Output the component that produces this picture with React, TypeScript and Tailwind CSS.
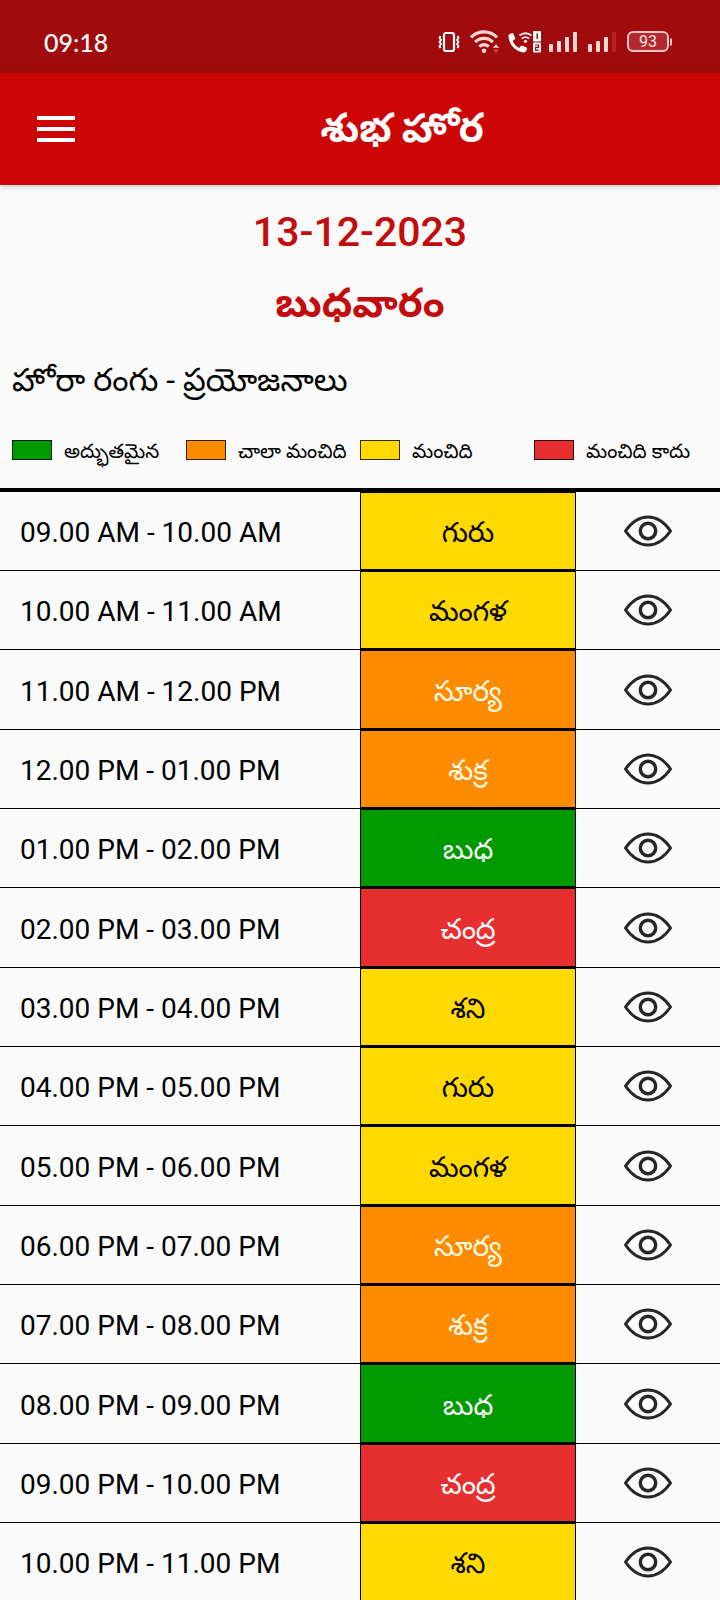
type Tone = 'great' | 'good' | 'fair' | 'bad';

const telugu = "font-['Roboto','Noto_Sans_Telugu','Noto_Sans',sans-serif]";

const toneFill: Record<Tone, string> = {
  great: 'bg-[#009a00]',
  good: 'bg-[#ff8c00]',
  fair: 'bg-[#ffda00]',
  bad: 'bg-[#e63030]',
};

const toneText: Record<Tone, string> = {
  great: 'text-white',
  good: 'text-[#fffbe8]',
  fair: 'text-black',
  bad: 'text-white',
};

const legend: { tone: Tone; label: string }[] = [
  { tone: 'great', label: 'అద్భుతమైన' },
  { tone: 'good', label: 'చాలా మంచిది' },
  { tone: 'fair', label: 'మంచిది' },
  { tone: 'bad', label: 'మంచిది కాదు' },
];

const horas: { time: string; name: string; tone: Tone }[] = [
  { time: '09.00 AM - 10.00 AM', name: 'గురు', tone: 'fair' },
  { time: '10.00 AM - 11.00 AM', name: 'మంగళ', tone: 'fair' },
  { time: '11.00 AM - 12.00 PM', name: 'సూర్య', tone: 'good' },
  { time: '12.00 PM - 01.00 PM', name: 'శుక్ర', tone: 'good' },
  { time: '01.00 PM - 02.00 PM', name: 'బుధ', tone: 'great' },
  { time: '02.00 PM - 03.00 PM', name: 'చంద్ర', tone: 'bad' },
  { time: '03.00 PM - 04.00 PM', name: 'శని', tone: 'fair' },
  { time: '04.00 PM - 05.00 PM', name: 'గురు', tone: 'fair' },
  { time: '05.00 PM - 06.00 PM', name: 'మంగళ', tone: 'fair' },
  { time: '06.00 PM - 07.00 PM', name: 'సూర్య', tone: 'good' },
  { time: '07.00 PM - 08.00 PM', name: 'శుక్ర', tone: 'good' },
  { time: '08.00 PM - 09.00 PM', name: 'బుధ', tone: 'great' },
  { time: '09.00 PM - 10.00 PM', name: 'చంద్ర', tone: 'bad' },
  { time: '10.00 PM - 11.00 PM', name: 'శని', tone: 'fair' },
];

function VibrateIcon() {
  return (
    <svg width="22" height="22" viewBox="0 0 22 22" fill="none" stroke="#fff" aria-hidden="true">
      <rect x="6" y="2" width="10" height="18" rx="2" strokeWidth="2.200" />
      <path d="M2.500 5l-1 2 1.500 2-1.500 2 1.500 2-1.500 2 1 2M19.500 5l1 2-1.500 2 1.500 2-1.500 2 1.500 2-1 2" strokeWidth="1.800" />
    </svg>
  );
}

function WifiIcon() {
  return (
    <svg width="30" height="24" viewBox="0 0 30 24" fill="none" stroke="#ffd6d6" aria-hidden="true">
      <path d="M1 7.500a18 18 0 0 1 26 0" strokeWidth="3.200" />
      <path d="M5.200 12.200a12 12 0 0 1 17.600 0" strokeWidth="3.200" />
      <path d="M9.300 16.600a6.500 6.500 0 0 1 9.400 0" strokeWidth="3.200" />
      <circle cx="14" cy="20.800" r="2.300" fill="#ffd6d6" stroke="none" />
      <path d="M26 14l3.500 4h-7z" fill="#ffd6d6" stroke="#a00c0c" strokeWidth=".5" />
      <path d="M23 19.500h6l-3 3.500z" fill="#c84a4a" stroke="none" />
    </svg>
  );
}

function WifiCallIcon() {
  return (
    <svg width="33" height="24" viewBox="0 0 33 24" fill="none" aria-hidden="true">
      <path
        d="M1 4.500l2.500-1.300c.8-.4 1.700 0 2 .8l1.500 3.700c.3.700.1 1.300-.4 1.700L4.700 10.800c1.200 3.200 3.400 5.700 6.500 7.200l1.700-1.900c.5-.5 1.100-.6 1.700-.3l3.700 1.800c.8.400 1 1.200.6 2L17.700 21.500c-.5.700-1.300 1-2.200.9C7.500 21.600 1.200 15 .5 6.500c-.1-.9-.1-1.600.5-2z"
        fill="#fff"
      />
      <path d="M11.500 5.500a9 9 0 0 1 12 0M13.800 8.600a5.500 5.500 0 0 1 7.400 0" stroke="#ffe9e9" strokeWidth="1.900" />
      <circle cx="17.500" cy="11.300" r="1.600" fill="#ffe9e9" />
      <rect x="25" y="1" width="8" height="10.500" rx="1" fill="#fff" />
      <rect x="25" y="12.500" width="8" height="10" rx="1" fill="#fff" />
      <path d="M29.200 3.500v5.500" stroke="#a00c0c" strokeWidth="1.500" />
      <path d="M27 15h3.500v2.300H27.600v2.900H31" stroke="#a00c0c" strokeWidth="1.200" />
    </svg>
  );
}

function SignalIcon({ full }: { full?: boolean }) {
  return (
    <svg width="29" height="22" viewBox="0 0 29 22" fill="#ffd6d6" aria-hidden="true">
      <rect x="0" y="13" width="4" height="8" rx="1" />
      <rect x="8" y="10" width="4" height="11" rx="1" />
      <rect x="16" y="6" width="4" height="15" rx="1" />
      <rect x="24" y="1" width="4" height="20" rx="1" fill={full ? '#ffd6d6' : '#b02525'} />
    </svg>
  );
}

function EyeIcon() {
  return (
    <svg width="48" height="32" viewBox="0 0 48 32" fill="none" stroke="#262626" aria-hidden="true">
      <path d="M1.500 16C7 8 14.500 2 24 2S41 8 46.500 16C41 24 33.500 30 24 30S7 24 1.500 16z" strokeWidth="3" />
      <circle cx="24" cy="16" r="7.700" strokeWidth="3.400" />
    </svg>
  );
}

export default function App() {
  return (
    <div className={`flex h-screen flex-col overflow-hidden bg-[#fafafa] text-black ${telugu}`}>
      <div className="flex h-[73px] shrink-0 items-center justify-between bg-[#a00c0c] pt-2.5 pr-12 pl-11 text-white">
        <span className="font-['Lato',sans-serif] text-[25px] leading-8 font-medium">09:18</span>
        <div className="flex items-center">
          <VibrateIcon />
          <div className="ml-2.5 flex items-center gap-2">
            <WifiIcon />
            <WifiCallIcon />
          </div>
          <div className="ml-2 flex items-center gap-2.5">
            <SignalIcon full />
            <SignalIcon />
          </div>
          <div className="ml-2.5 flex items-center">
            <span className="flex h-[21px] w-[42px] items-center justify-center rounded-md border-2 border-[#ffc4c4] bg-[#b32a2e] text-base leading-none text-[#ffe4e4]">
              93
            </span>
            <span className="ml-px h-2 w-0.5 rounded-r bg-[#ffc4c4]" />
          </div>
        </div>
      </div>

      <header className="z-10 flex h-28 shrink-0 items-center bg-[#cc0605] text-white shadow-[0_2px_6px_rgba(0,0,0,0.18)]">
        <button type="button" aria-label="Menu" className="flex w-[84px] flex-col gap-[7px] pl-[37px]">
          <span className="h-1 w-[38px] bg-white" />
          <span className="h-1 w-[38px] bg-white" />
          <span className="h-1 w-[38px] bg-white" />
        </button>
        <h1 className="flex-1 text-center text-[40px] leading-[52px] font-bold">శుభ హోర</h1>
      </header>

      <main className="min-h-0 flex-1 overflow-y-auto [scrollbar-width:none]">
        <section className="pt-[21px] text-center text-[#c20c0d]">
          <p className="text-[41px] leading-[52px] font-medium">13-12-2023</p>
          <h2 className="mt-5 text-[40px] leading-[52px] font-bold">బుధవారం</h2>
        </section>

        <section className="px-3">
          <h3 className="mt-[30px] text-[32px] leading-10">హోరా రంగు - ప్రయోజనాలు</h3>
          <ul className="mt-[34px] mb-[22px] grid grid-cols-4">
            {legend.map((item) => (
              <li key={item.label} className="flex h-8 items-center gap-3 whitespace-nowrap">
                <span className={`h-5 w-10 shrink-0 border border-black/80 ${toneFill[item.tone]}`} />
                <span className="pt-0.5 text-[20px] leading-8">{item.label}</span>
              </li>
            ))}
          </ul>
        </section>

        <table className="w-full table-fixed border-separate border-spacing-0 border-t-4 border-black">
          <tbody>
            {horas.map((hora) => (
              <tr key={hora.time} className="h-[79px] nth-[3n]:h-20">
                <td className="w-1/2 border-b border-black pt-1 pl-5 text-[28px] leading-10">{hora.time}</td>
                <td
                  className={`w-[30%] border border-b-2 border-black pt-1 text-center text-[28px] leading-10 ${toneFill[hora.tone]} ${toneText[hora.tone]}`}
                >
                  {hora.name}
                </td>
                <td className="w-1/5 border-b border-black text-center">
                  <button type="button" aria-label={`${hora.time} ${hora.name}`} className="inline-flex align-middle">
                    <EyeIcon />
                  </button>
                </td>
              </tr>
            ))}
          </tbody>
        </table>
      </main>
    </div>
  );
}
